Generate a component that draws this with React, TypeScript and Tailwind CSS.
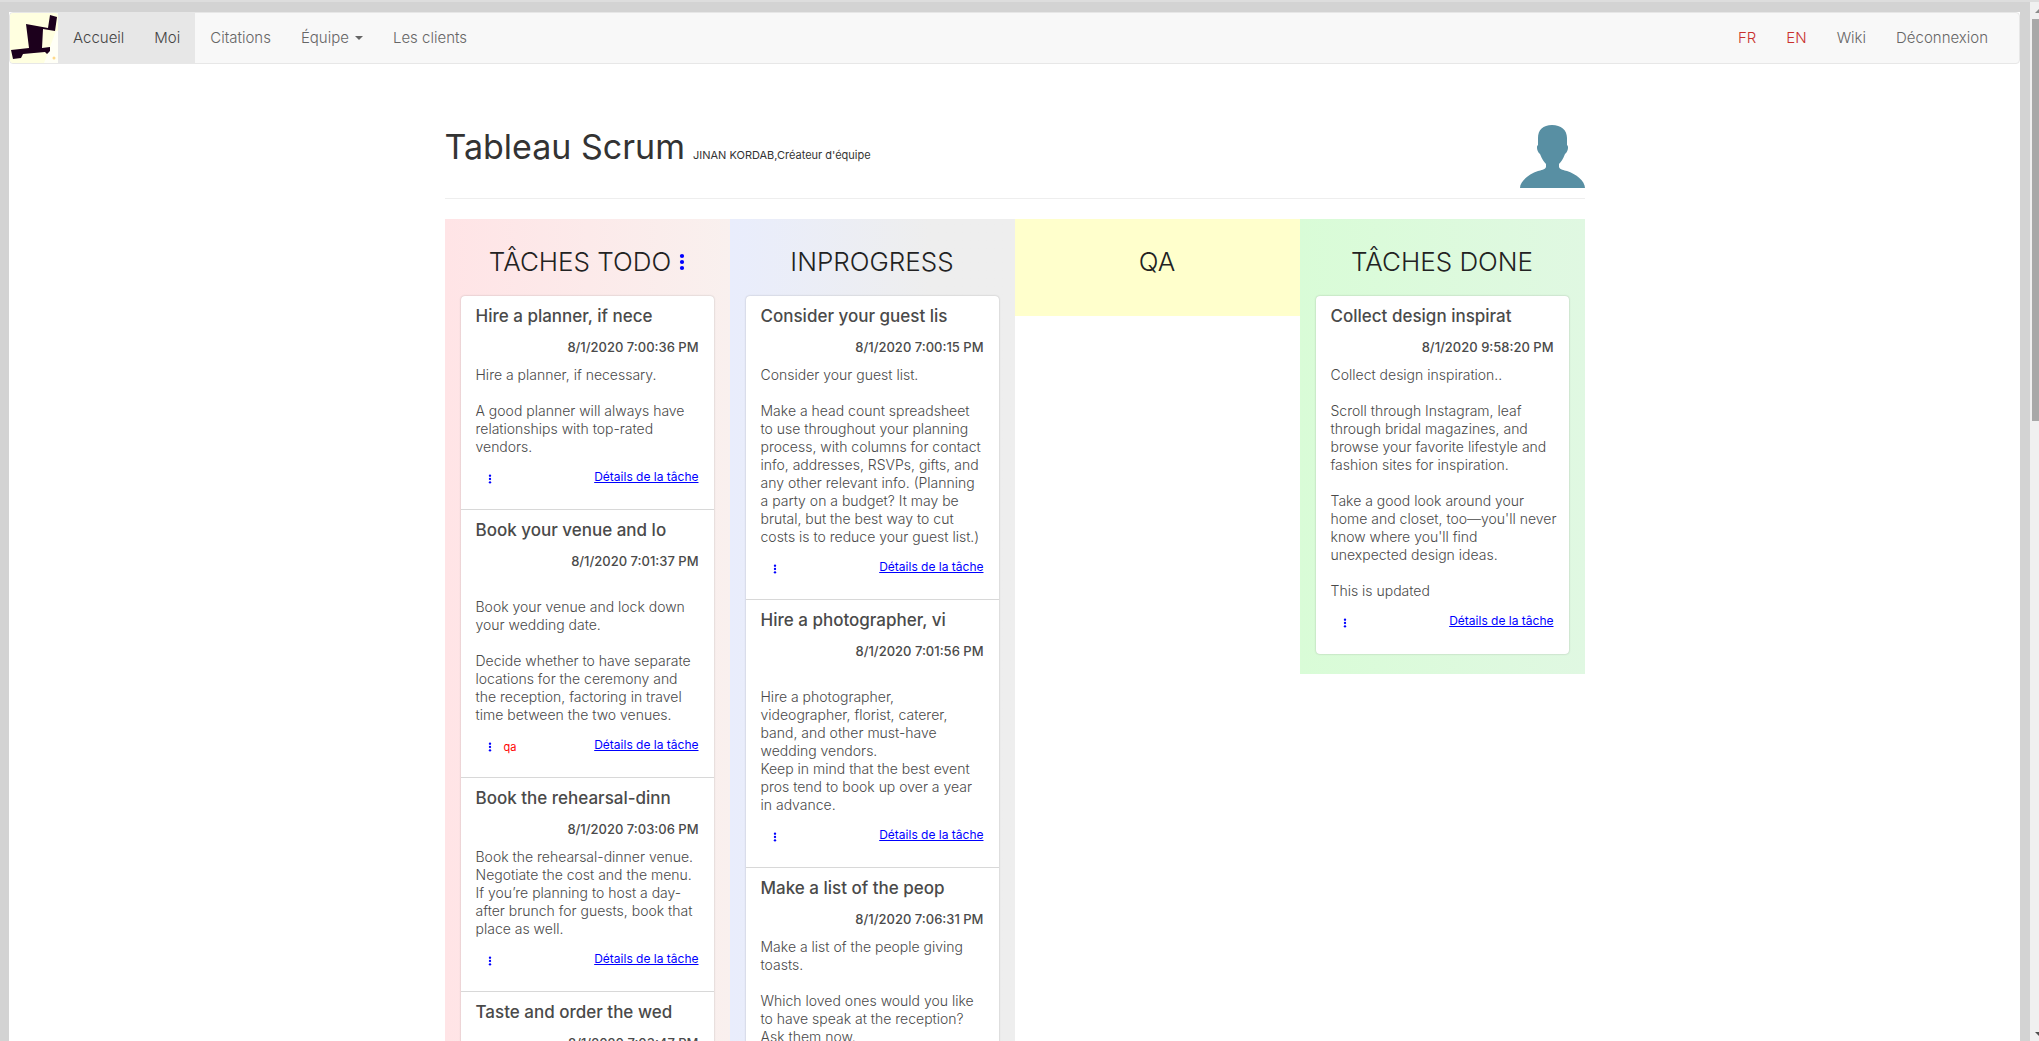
import React from "react";

type Task = { title: string; date: string; body: string; tag?: string };

const todo: Task[] = [
  {
    title: "Hire a planner, if nece",
    date: "8/1/2020 7:00:36 PM",
    body: "Hire a planner, if necessary.\n\nA good planner will always have\nrelationships with top-rated\nvendors.",
  },
  {
    title: "Book your venue and lo",
    date: "8/1/2020 7:01:37 PM",
    body: "\nBook your venue and lock down\nyour wedding date.\n\nDecide whether to have separate\nlocations for the ceremony and\nthe reception, factoring in travel\ntime between the two venues.",
    tag: "qa",
  },
  {
    title: "Book the rehearsal-dinn",
    date: "8/1/2020 7:03:06 PM",
    body: "Book the rehearsal-dinner venue.\nNegotiate the cost and the menu.\nIf you’re planning to host a day-\nafter brunch for guests, book that\nplace as well.",
  },
  { title: "Taste and order the wed", date: "8/1/2020 7:03:47 PM", body: "" },
];

const inProgress: Task[] = [
  {
    title: "Consider your guest lis",
    date: "8/1/2020 7:00:15 PM",
    body: "Consider your guest list.\n\nMake a head count spreadsheet\nto use throughout your planning\nprocess, with columns for contact\ninfo, addresses, RSVPs, gifts, and\nany other relevant info. (Planning\na party on a budget? It may be\nbrutal, but the best way to cut\ncosts is to reduce your guest list.)",
  },
  {
    title: "Hire a photographer, vi",
    date: "8/1/2020 7:01:56 PM",
    body: "\nHire a photographer,\nvideographer, florist, caterer,\nband, and other must-have\nwedding vendors.\nKeep in mind that the best event\npros tend to book up over a year\nin advance.",
  },
  {
    title: "Make a list of the peop",
    date: "8/1/2020 7:06:31 PM",
    body: "Make a list of the people giving\ntoasts.\n\nWhich loved ones would you like\nto have speak at the reception?\nAsk them now.",
  },
];

const done: Task[] = [
  {
    title: "Collect design inspirat",
    date: "8/1/2020 9:58:20 PM",
    body: "Collect design inspiration..\n\nScroll through Instagram, leaf\nthrough bridal magazines, and\nbrowse your favorite lifestyle and\nfashion sites for inspiration.\n\nTake a good look around your\nhome and closet, too—you'll never\nknow where you'll find\nunexpected design ideas.\n\nThis is updated",
  },
];

function Dots({ className }: { className: string }) {
  return (
    <svg viewBox="0 0 6 18" className={className} fill="#0000ff" aria-hidden="true">
      <circle cx="3" cy="3" r="2.1" />
      <circle cx="3" cy="9" r="2.1" />
      <circle cx="3" cy="15" r="2.1" />
    </svg>
  );
}

function Card({ task }: { task: Task }) {
  return (
    <li className="border-b border-[#d8d8d8] px-[15px] pt-2 pb-[22px] last:border-transparent">
      <h4 className="h-6 text-[17px] leading-6 font-medium whitespace-nowrap">{task.title}</h4>
      <p className="my-2 text-right text-[13px] leading-[22px] font-medium">{task.date}</p>
      <p className="text-sm leading-[18px] font-light whitespace-pre">{task.body}</p>
      <div className="mt-[11px] flex h-5 items-center justify-between">
        <div className="flex items-center gap-3 pt-1 pl-3">
          <button type="button" aria-label="Actions" className="block">
            <Dots className="h-[10px] w-1" />
          </button>
          {task.tag && <span className="text-[11px] leading-3 text-[#ff0000]">{task.tag}</span>}
        </div>
        <a href="#details" className="text-xs text-[#0000ff] underline">
          Détails de la tâche
        </a>
      </div>
    </li>
  );
}

function Column({
  title,
  tasks,
  className,
  menu,
}: {
  title: string;
  tasks: Task[];
  className: string;
  menu?: boolean;
}) {
  return (
    <section className={`px-4 pb-5 ${className}`}>
      <h2 className="flex h-[77px] items-center justify-center gap-2 pt-2 text-[26px] font-light text-[#222222]">
        {title}
        {menu && (
          <button type="button" aria-label="Menu">
            <Dots className="h-5 w-[6px]" />
          </button>
        )}
      </h2>
      {tasks.length > 0 && (
        <ul className="rounded-sm bg-white text-[#4a4a4a] shadow-[0_0_2px_rgba(0,0,0,0.25)]">
          {tasks.map((t) => (
            <Card key={t.title} task={t} />
          ))}
        </ul>
      )}
    </section>
  );
}

function Logo() {
  return (
    <svg viewBox="0 0 48 50" className="h-[50px] w-12" aria-label="Logo">
      <rect width="48" height="50" rx="3" fill="#ffffe0" />
      <path d="M34 50 46 18H48V50Z" fill="#fffff6" />
      <path d="M16 11 38 15 40 2 47 4 45 18 33 16 32 35 40 34 40 38 37 41 35 39 13 41 11 45 3 46 1 37 19 35Z" fill="#1c001c" />
      <circle cx="44" cy="45" r="1.5" fill="#ffd98a" />
    </svg>
  );
}

function Navbar() {
  const link = "flex items-center px-[15px]";
  return (
    <nav className="flex h-[52px] rounded border border-[#e7e7e7] bg-[#f8f8f8] text-[15px] font-light text-[#666666]">
      <a href="#home" aria-label="Logo">
        <Logo />
      </a>
      <a href="#accueil" className={`${link} bg-[#e7e7e7] text-[#444444]`}>Accueil</a>
      <a href="#moi" className={`${link} bg-[#e7e7e7] text-[#444444]`}>Moi</a>
      <a href="#citations" className={link}>Citations</a>
      <button type="button" className={`${link} gap-[6px]`}>
        Équipe
        <span className="border-x-4 border-t-4 border-x-transparent border-t-[#666666]" />
      </button>
      <a href="#clients" className={link}>Les clients</a>
      <div className="mr-4 ml-auto flex">
        <a href="#fr" className={`${link} text-[#c9302c]`}>FR</a>
        <a href="#en" className={`${link} text-[#c9302c]`}>EN</a>
        <a href="#wiki" className={link}>Wiki</a>
        <a href="#logout" className={link}>Déconnexion</a>
      </div>
    </nav>
  );
}

function Avatar() {
  return (
    <svg viewBox="0 0 65 63" className="h-[63px] w-[65px]" fill="#588fa3" aria-label="Avatar">
      <path d="M32 0C41 0 47 5 47 13V20C49 21 48 27 45 29C43 34 41 37 39 39V42C40 45 44 45 47 46C56 49 65 56 65 63H0C0 56 9 49 18 46C21 45 25 45 26 42V39C24 37 22 34 20 29C17 27 16 21 18 20V13C18 5 23 0 32 0Z" />
    </svg>
  );
}

export default function App() {
  return (
    <div className="flex h-screen overflow-hidden bg-[#d3d3d3] font-['Inter','Liberation_Sans',sans-serif]">
      <div className="min-w-0 flex-1 border-t-2 border-[#dddddd] pt-[10px] pr-[10px] pl-[9px]">
        <div className="min-h-full bg-white">
          <Navbar />
          <main className="mx-auto max-w-[1140px]">
            <header className="flex h-[135px] items-end justify-between border-b border-[#eeeeee] pb-[10px]">
              <h1 className="flex items-baseline gap-2 pb-2 text-[34px] leading-[50px] text-[#333333]">
                Tableau Scrum
                <small className="text-[11px]">JINAN KORDAB,Créateur d'équipe</small>
              </h1>
              <Avatar />
            </header>
            <div className="mt-5 grid grid-cols-4 items-start">
              <Column title="TÂCHES TODO" tasks={todo} menu className="bg-linear-to-r from-[#ffe4e6] to-[#f9f0ee]" />
              <Column title="INPROGRESS" tasks={inProgress} className="bg-linear-to-r from-[#e9edfc] to-[#eeeeee] to-70%" />
              <Column title="QA" tasks={[]} className="bg-[#ffffcc]" />
              <Column title="TÂCHES DONE" tasks={done} className="bg-linear-to-r from-[#d9fcd7] to-[#e0f8e2]" />
            </div>
          </main>
        </div>
      </div>
      <div className="relative w-[9px] overflow-hidden border-t-2 border-[#dddddd] bg-[#f0f0f0] pt-[17px] pl-[2px]" aria-hidden="true">
        <div className="h-[402px] bg-[#a8a8a8]" />
        <span className="absolute top-[7px] left-[5px] border-x-4 border-b-4 border-x-transparent border-b-[#8a8a8a]" />
        <span className="absolute bottom-[5px] left-[5px] border-x-4 border-t-4 border-x-transparent border-t-[#505050]" />
      </div>
    </div>
  );
}
